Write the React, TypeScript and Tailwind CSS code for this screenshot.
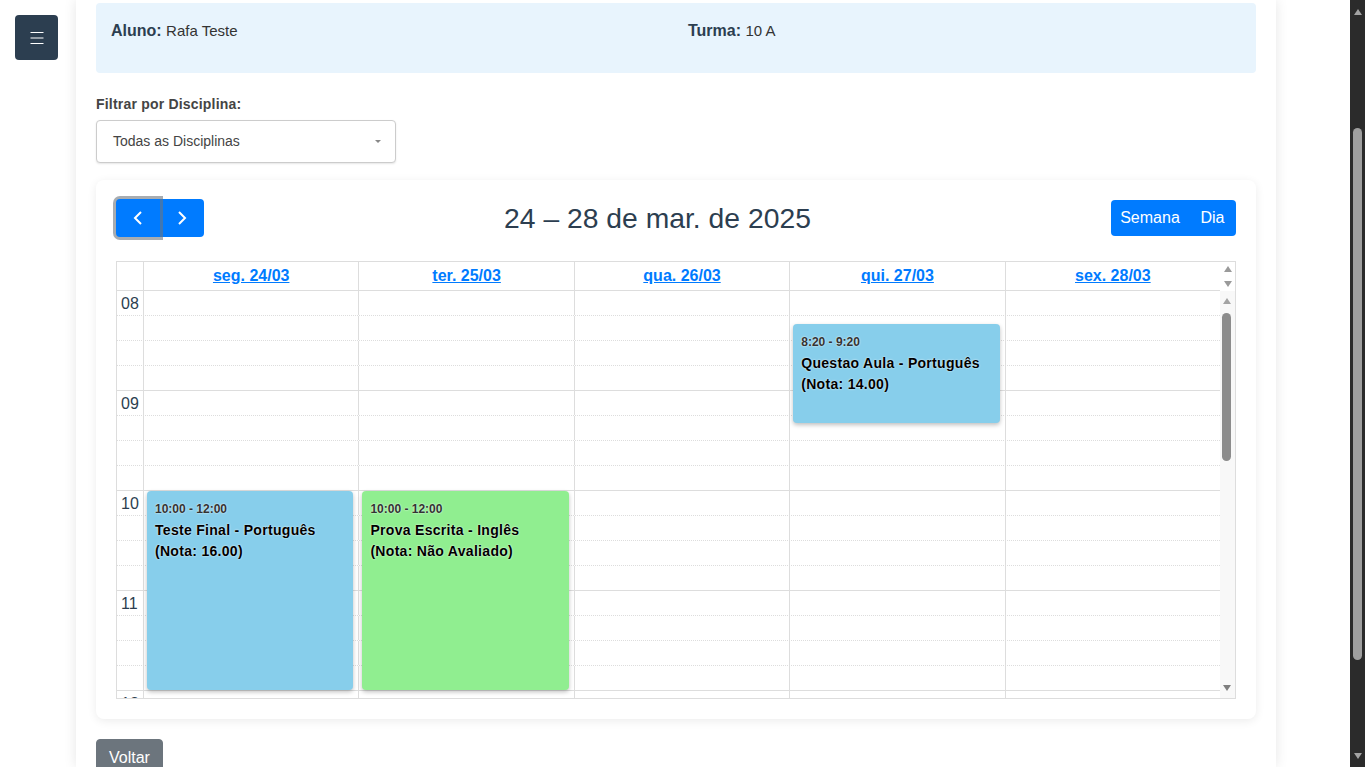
import React from 'react'

type CalEvent = {
  day: number
  start: number
  end: number
  time: string
  title: string
  nota: string
  color: string
}

const days = ['seg. 24/03', 'ter. 25/03', 'qua. 26/03', 'qui. 27/03', 'sex. 28/03']
const hours = ['08', '09', '10', '11', '12']
const firstMinute = 8 * 60

const events: CalEvent[] = [
  { day: 0, start: 600, end: 720, time: '10:00 - 12:00', title: 'Teste Final - Português', nota: '(Nota: 16.00)', color: 'bg-[#87ceeb]' },
  { day: 1, start: 600, end: 720, time: '10:00 - 12:00', title: 'Prova Escrita - Inglês', nota: '(Nota: Não Avaliado)', color: 'bg-[#90ee90]' },
  { day: 3, start: 500, end: 560, time: '8:20 - 9:20', title: 'Questao Aula - Português', nota: '(Nota: 14.00)', color: 'bg-[#87ceeb]' },
]

function Tri({ up, className }: { up?: boolean; className?: string }) {
  return (
    <svg width="8" height="6" viewBox="0 0 8 6" className={className}>
      <path d={up ? 'M0 6 L4 0 L8 6 Z' : 'M0 0 L8 0 L4 6 Z'} fill="currentColor" />
    </svg>
  )
}

function EventCard({ ev }: { ev: CalEvent }) {
  const top = ((ev.start - firstMinute) * 100) / 60
  const height = ((ev.end - ev.start) * 100) / 60 - 1
  return (
    <div
      className={`absolute left-[3px] right-[5px] rounded-[4px] px-2 pt-[9px] shadow-[0_2px_4px_rgba(0,0,0,0.25)] ${ev.color}`}
      style={{ top, height }}
    >
      <div className="mb-[2px] text-[12px] font-bold leading-[18px] text-[#333] [text-shadow:0_0_2px_#fff]">{ev.time}</div>
      <div className="text-[14px] font-bold leading-[21px] tracking-[0.3px] text-black [text-shadow:0_0_2px_#fff]">
        <div>{ev.title}</div>
        <div>{ev.nota}</div>
      </div>
    </div>
  )
}

function Calendar() {
  return (
    <div className="rounded-lg bg-white px-5 pb-5 pt-[19px] shadow-[0_2px_10px_rgba(0,0,0,0.08)]">
      {/* Toolbar */}
      <div className="mb-6 flex h-[38px] items-center justify-between">
        <div className="flex">
          <button className="relative z-10 flex h-[38px] w-[44px] items-center justify-center rounded-l-[4px] bg-[#007bff] text-white shadow-[0_0_0_3px_rgba(108,117,125,0.6)]">
            <svg width="10" height="14" viewBox="0 0 10 14">
              <path d="M8 1 L2 7 L8 13" fill="none" stroke="currentColor" strokeWidth="2" />
            </svg>
          </button>
          <button className="flex h-[38px] w-[44px] items-center justify-center rounded-r-[4px] bg-[#007bff] text-white">
            <svg width="10" height="14" viewBox="0 0 10 14">
              <path d="M2 1 L8 7 L2 13" fill="none" stroke="currentColor" strokeWidth="2" />
            </svg>
          </button>
        </div>
        <h2 className="text-[28.3px] font-normal leading-none text-[#2c3e50]">24 – 28 de mar. de 2025</h2>
        <div className="flex h-[36px] overflow-hidden rounded-[4px] bg-[#007bff] text-[16px] text-white">
          <button className="w-[78px] text-center">Semana</button>
          <button className="w-[47px] text-center">Dia</button>
        </div>
      </div>

      {/* Grid */}
      <div className="border border-[#ddd]">
        <div className="flex h-[29px] border-b border-[#ddd]">
          <div className="w-[27px] shrink-0 border-r border-[#ddd]" />
          {days.map((d, i) => (
            <div
              key={d}
              className={`flex flex-1 items-center justify-center ${i < 4 ? 'border-r border-[#ddd]' : ''}`}
            >
              <a className="text-[16px] font-bold text-[#007bff] underline">{d}</a>
            </div>
          ))}
          <div className="-mb-px flex w-[15px] shrink-0 flex-col items-center justify-center gap-[9px] bg-white text-[#9a9a9a]">
            <Tri up />
            <Tri />
          </div>
        </div>

        <div className="flex h-[407px]">
          <div className="relative flex-1 overflow-hidden">
            {hours.map(h => (
              <div key={h}>
                {[0, 1, 2, 3].map(i => (
                  <div
                    key={i}
                    className={`flex h-[25px] border-b border-[#ddd] ${i === 3 ? 'border-solid' : 'border-dotted'}`}
                  >
                    <div className="w-[27px] shrink-0 border-r border-solid border-[#ddd] pl-1 pt-[3px] text-[16px] leading-5 text-[#2c3e50]">
                      {i === 0 ? h : ''}
                    </div>
                    {days.map((d, j) => (
                      <div key={d} className={`flex-1 ${j < 4 ? 'border-r border-solid border-[#ddd]' : ''}`} />
                    ))}
                  </div>
                ))}
              </div>
            ))}

            {/* Events layer */}
            <div className="absolute inset-0 flex">
              <div className="w-[27px] shrink-0" />
              {days.map((d, j) => (
                <div key={d} className={`relative flex-1 ${j < 4 ? 'border-r border-transparent' : ''}`}>
                  {events
                    .filter(ev => ev.day === j)
                    .map(ev => (
                      <EventCard key={ev.title} ev={ev} />
                    ))}
                </div>
              ))}
            </div>
          </div>

          {/* Inner scrollbar */}
          <div className="relative w-[15px] shrink-0 bg-[#f8f8f8] text-[#a3a3a3]">
            <Tri up className="absolute left-[3px] top-[7px]" />
            <div className="absolute left-[2px] top-[22px] h-[148px] w-[9px] rounded-full bg-[#8c8c8c]" />
            <Tri className="absolute bottom-[7px] left-[3px] text-[#7f7f7f]" />
          </div>
        </div>
      </div>
    </div>
  )
}

export default function App() {
  return (
    <div className="flex h-[767px] w-full overflow-hidden bg-white font-['Liberation_Sans',Arial,sans-serif]">
      <div className="relative flex-1 overflow-hidden pl-[76px]">
        {/* Sidebar toggle */}
        <button className="absolute left-[15px] top-[15px] flex h-[45px] w-[43px] items-center justify-center rounded-[4px] bg-[#2c3e50]">
          <svg width="14" height="14" viewBox="0 0 14 14">
            <rect x="0.5" y="1" width="13" height="1" fill="#fff" />
            <rect x="0.5" y="6.5" width="13" height="1" fill="#fff" />
            <rect x="0.5" y="12" width="13" height="1" fill="#fff" />
          </svg>
        </button>

        <div className="h-full w-[1200px] bg-white px-5 pt-[3px] shadow-[0_0_12px_rgba(0,0,0,0.1)]">
          {/* Student info */}
          <div className="grid h-[70px] grid-cols-2 gap-6 rounded-[4px] bg-[#e8f4fd] px-[15px] pt-[16px]">
            <p className="text-[16px] leading-6 text-[#333]">
              <strong className="font-bold text-[#2c3e50]">Aluno:</strong> <span className="text-[15px]">Rafa Teste</span>
            </p>
            <p className="text-[16px] leading-6 text-[#333]">
              <strong className="font-bold text-[#2c3e50]">Turma:</strong> <span className="text-[15px]">10 A</span>
            </p>
          </div>

          {/* Filter */}
          <div className="mt-[21px]">
            <label className="mb-[5px] block text-[14px] font-bold leading-[21px] tracking-[0.2px] text-[#444]">
              Filtrar por Disciplina:
            </label>
            <div className="flex h-[43px] w-[300px] items-center justify-between rounded-[4px] border border-[#ccc] bg-white pl-4 pr-[14px] shadow-[0_1px_2px_rgba(0,0,0,0.1)]">
              <span className="text-[14px] text-[#444]">Todas as Disciplinas</span>
              <svg width="6" height="4" viewBox="0 0 6 4">
                <path d="M0 0 L6 0 L3 3 Z" fill="#888" />
              </svg>
            </div>
          </div>

          <div className="mt-[17px]">
            <Calendar />
          </div>

          <button className="mt-5 rounded-[4px] border border-[#6c757d] bg-[#6c757d] px-3 py-1.5 text-[16px] leading-6 text-white">
            Voltar
          </button>
        </div>
      </div>

      {/* Browser scrollbar */}
      <div className="relative h-full w-[15px] shrink-0 bg-[#2b2b2b] text-[#a3a3a3]">
        <Tri up className="absolute left-[4px] top-[9px]" />
        <div className="absolute left-[3px] top-[128px] h-[532px] w-[9px] rounded-full bg-[#9f9f9f]" />
        <Tri className="absolute bottom-[8px] left-[4px]" />
      </div>
    </div>
  )
}
